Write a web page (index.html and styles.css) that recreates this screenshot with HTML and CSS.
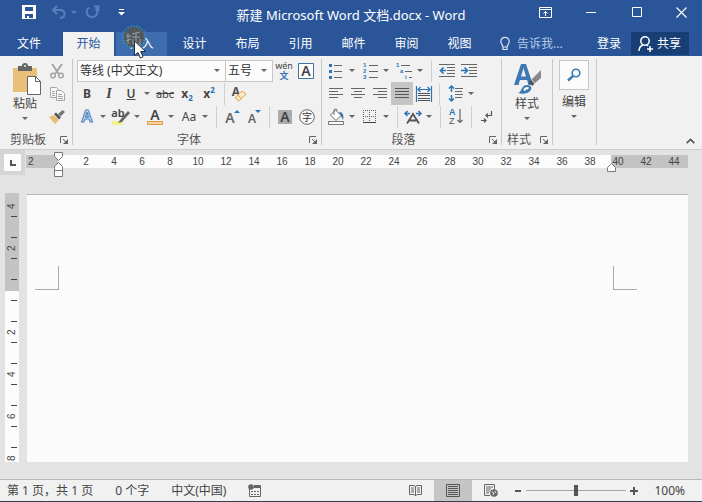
FILE: index.html
```html
<!DOCTYPE html>
<html lang="zh-CN">
<head>
  <meta charset="utf-8">
  <title>新建 Microsoft Word 文档.docx - Word</title>
  <link rel="stylesheet" href="styles.css">
</head>
<body>
  <header class="titlebar">
    <div class="quick-access">
      <button class="qa-btn" aria-label="保存">
        <svg width="14" height="14" viewBox="0 0 14 14"><path d="M0 0h14v14H0z" fill="#fff"/><path d="M3 2h8v4H3zM3 9h8v4H7v-2H5v2H3z" fill="#2a5699"/></svg>
      </button>
      <button class="qa-btn qa-off" aria-label="撤消">
        <svg width="15" height="14" viewBox="0 0 15 14"><path d="M6 1L2 5l4 4M2 5h7c3 0 4.500 1.500 4.500 4S12 13 9 13" fill="none" stroke="currentColor" stroke-width="2"/></svg>
      </button>
      <button class="drop qa-off" aria-label="撤消选项"></button>
      <button class="qa-btn qa-off" aria-label="重复">
        <svg width="15" height="14" viewBox="0 0 15 14"><path d="M9 1.500h4.500V6M13 2.500L10.500 5M4 2.500A5.300 5.300 0 1 0 11.500 4" fill="none" stroke="currentColor" stroke-width="2"/></svg>
      </button>
      <button class="qa-btn" aria-label="自定义快速访问工具栏">
        <svg width="7" height="7" viewBox="0 0 7 7"><path d="M1 0h5v1H1zM0 3h7L3.500 6.500z" fill="#fff"/></svg>
      </button>
    </div>
    <h1 class="doc-title">新建 Microsoft Word 文档.docx - Word</h1>
    <div class="window-controls">
      <button class="win-btn" aria-label="功能区显示选项">
        <svg width="13" height="11" viewBox="0 0 13 11"><path d="M.5.5h12v10H.5zM0 2.500h13M6.500 9V4.500M4.500 6.500l2-2 2 2" fill="none" stroke="#fff"/></svg>
      </button>
      <button class="win-btn" aria-label="最小化">
        <svg width="11" height="11" viewBox="0 0 11 11"><path d="M0 5.500h10" stroke="#fff"/></svg>
      </button>
      <button class="win-btn" aria-label="最大化">
        <svg width="11" height="11" viewBox="0 0 11 11"><path d="M.5.5h9v9h-9z" fill="none" stroke="#fff"/></svg>
      </button>
      <button class="win-btn" aria-label="关闭">
        <svg width="11" height="11" viewBox="0 0 11 11"><path d="M.5.5l10 10M10.500.5l-10 10" stroke="#fff" stroke-width="1.1"/></svg>
      </button>
    </div>
  </header>

  <nav class="tabs">
    <button class="tab tab-file">文件</button>
    <button class="tab tab-active">开始</button>
    <button class="tab tab-hover">插入
      <svg class="pointer" width="28" height="38" viewBox="0 0 28 38"><circle cx="12" cy="12" r="10.500" fill="#51585f"/><circle cx="12" cy="12" r="11" fill="none" stroke="#2fa3bd" stroke-width="2" stroke-dasharray="1 2"/><path d="M6 8v11M4 11h5M4 16l5-2M10 9l8-2M10 12h8M14 8v11M11 14v5h7v-5" fill="none" stroke="#98a09f"/><path d="M12.500 16v14.500l3.500-3 2.300 5.500 2.700-1.200-2.300-5.300h4.800z" fill="#fff" stroke="#222b3b"/></svg>
    </button>
    <button class="tab">设计</button>
    <button class="tab">布局</button>
    <button class="tab">引用</button>
    <button class="tab">邮件</button>
    <button class="tab">审阅</button>
    <button class="tab">视图</button>
    <button class="tell-me">
      <svg width="10" height="14" viewBox="0 0 10 14"><path d="M3 10C3 8 .8 7 .8 4.500a4.200 4.200 0 0 1 8.400 0C9.200 7 7 8 7 10zM3 10v2.500h4V10" fill="none" stroke="#dce6f4" stroke-width="1.2"/></svg>
      告诉我...
    </button>
    <div class="account">
      <button class="sign-in">登录</button>
      <button class="share">
        <svg width="15" height="16" viewBox="0 0 15 16"><circle cx="7" cy="5" r="4.200" fill="none" stroke="#fff" stroke-width="1.500"/><path d="M1 15c0-3 1.500-5 4-6M9 9l1 1M12 10v6M9 13h6" fill="none" stroke="#fff" stroke-width="1.500"/></svg>
        共享
      </button>
    </div>
  </nav>

  <main class="ribbon">
    <section class="group">
      <div class="group-body group-split">
        <button class="big-btn">
          <svg width="32" height="33" viewBox="0 0 32 33"><path d="M4 5h24v24H4z" fill="#e8c079"/><path d="M9 3h4a3 3 0 0 1 6 0h4v5H9z" fill="#666"/><circle cx="16" cy="3" r="1" fill="#f1f1f1"/><path d="M18.500 13.500h8l5 5v13h-13z" fill="#fff" stroke="#666"/><path d="M26.500 13.500v5h5" fill="none" stroke="#666"/></svg>
          <span>粘贴</span>
          <i class="caret"></i>
        </button>
        <div class="stack">
          <button class="tool" aria-label="剪切">
            <svg width="16" height="16" viewBox="0 0 16 16" fill="none" stroke="#a5a5a5"><path d="M3 1l7 10M13 1L6 11" stroke-width="2"/><circle cx="4" cy="12.500" r="2.300" stroke-width="1.500"/><circle cx="12" cy="12.500" r="2.300" stroke-width="1.500"/></svg>
          </button>
          <button class="tool" aria-label="复制">
            <svg width="15" height="14" viewBox="0 0 15 14" fill="#f6f6f6" stroke="#a5a5a5"><path d="M.5.500h6l2 2v8h-8z"/><path d="M2 4.500h3M2 6.500h3M2 8.500h3"/><path d="M6.500 3.500h5l3 3v7h-8z"/><path d="M8 7.500h4M8 9.500h5M8 11.500h5"/></svg>
          </button>
          <button class="tool" aria-label="格式刷">
            <svg width="16" height="14" viewBox="0 0 16 14"><path d="M0 7l5-2 5 5-4 4z" fill="#e8bd72"/><path d="M5 4l2-1.500 5 5L10 9.500z" fill="#555"/><path d="M9 4l4.500-4L16 2l-4.500 4.500z" fill="#777"/></svg>
          </button>
        </div>
      </div>
      <footer class="group-foot"><span>剪贴板</span><button class="launcher" aria-label="剪贴板设置"><svg width="8" height="8" viewBox="0 0 8 8"><path d="M.5 7V.5H7M3 3l3 3" fill="none" stroke="#666"/><path d="M8 3v5H3z" fill="#666"/></svg></button></footer>
    </section>

    <section class="group">
      <div class="group-body">
        <div class="row row-combos">
          <label class="combo combo-font"><select aria-label="字体"><option>等线 (中文正文)</option></select><i class="caret"></i></label>
          <label class="combo combo-size"><select aria-label="字号"><option>五号</option></select><i class="caret"></i></label>
          <button class="tool" aria-label="拼音指南">
            <svg width="20" height="20" viewBox="0 0 20 20"><text x="10" y="8" font-size="9" text-anchor="middle" fill="#444">wén</text><text x="10" y="18" font-size="9" font-weight="bold" text-anchor="middle" fill="#2e75b6">文</text></svg>
          </button>
          <button class="tool" aria-label="字符边框">
            <svg width="16" height="16" viewBox="0 0 16 16"><path d="M.5.5h15v15H.5z" fill="#fff" stroke="#41719c"/><text x="8" y="13" font-size="14" font-weight="600" text-anchor="middle" fill="#444">A</text></svg>
          </button>
        </div>
        <div class="row">
          <button class="tool"><b>B</b></button>
          <button class="tool italic">I</button>
          <button class="tool underline">U</button>
          <button class="drop" aria-label="下划线样式"></button>
          <button class="tool strike">abc</button>
          <button class="tool script"><b>x<sub>2</sub></b></button>
          <button class="tool script"><b>x<sup>2</sup></b></button>
          <hr class="sep">
          <button class="tool" aria-label="清除所有格式">
            <svg width="16" height="16" viewBox="0 0 16 16"><text x="4" y="10" font-size="12" font-weight="bold" text-anchor="middle" fill="#555">A</text><path d="M10 5l4 3-7 7-4-3z" fill="#fbe8c6" stroke="#e3a24a"/><path d="M5.500 9l4 3.500" stroke="#e3a24a"/></svg>
          </button>
        </div>
        <div class="row">
          <button class="tool" aria-label="文本效果">
            <svg width="16" height="18" viewBox="0 0 16 18"><text x="8" y="14" font-size="16" font-weight="600" text-anchor="middle" fill="#fff" stroke="#4a84c4" stroke-width="1.200">A</text></svg>
          </button>
          <button class="drop" aria-label="文本效果选项"></button>
          <button class="tool" aria-label="突出显示">
            <svg width="18" height="18" viewBox="0 0 18 18"><path d="M0 13h11v4H0z" fill="#f3f08e"/><text x="6" y="9" font-size="11" font-weight="600" text-anchor="middle" fill="#444">ab</text><path d="M16 3l2 2-8 9-4 1 2-3z" fill="#666"/></svg>
          </button>
          <button class="drop" aria-label="突出显示颜色"></button>
          <button class="tool" aria-label="字体颜色">
            <svg width="16" height="18" viewBox="0 0 16 18"><text x="8" y="12" font-size="14" font-weight="600" text-anchor="middle" fill="#444">A</text><path d="M.5 13.500h15v3H.5z" fill="#f6d19a" stroke="#d99a4e"/></svg>
          </button>
          <button class="drop" aria-label="字体颜色选项"></button>
          <button class="tool">Aa</button>
          <button class="drop" aria-label="更改大小写"></button>
          <hr class="sep">
          <button class="tool" aria-label="增大字号">
            <svg width="16" height="18" viewBox="0 0 16 18"><text x="6" y="15" font-size="14" font-weight="600" text-anchor="middle" fill="#666">A</text><path d="M10 5h6l-3-3z" fill="#2e75b6"/></svg>
          </button>
          <button class="tool" aria-label="减小字号">
            <svg width="16" height="18" viewBox="0 0 16 18"><text x="6" y="15" font-size="12" font-weight="600" text-anchor="middle" fill="#666">A</text><path d="M9 2h6l-3 3z" fill="#2e75b6"/></svg>
          </button>
          <hr class="sep">
          <button class="tool" aria-label="字符底纹">
            <svg width="14" height="14" viewBox="0 0 14 14"><path d="M0 0h14v14H0z" fill="#ababab"/><text x="7" y="12" font-size="14" font-weight="600" text-anchor="middle" fill="#444">A</text></svg>
          </button>
          <button class="tool" aria-label="带圈字符">
            <svg width="16" height="16" viewBox="0 0 16 16"><circle cx="8" cy="8" r="7.300" fill="#fafafa" stroke="#666"/><text x="8" y="12" font-size="10" text-anchor="middle" fill="#333">字</text></svg>
          </button>
        </div>
      </div>
      <footer class="group-foot"><span>字体</span><button class="launcher" aria-label="字体设置"><svg width="8" height="8" viewBox="0 0 8 8"><path d="M.5 7V.5H7M3 3l3 3" fill="none" stroke="#666"/><path d="M8 3v5H3z" fill="#666"/></svg></button></footer>
    </section>

    <section class="group">
      <div class="group-body">
        <div class="row">
          <button class="tool" aria-label="项目符号">
            <svg width="14" height="16" viewBox="0 0 14 16"><path d="M0 1h3v3H0zM0 7h3v3H0zM0 13h3v3H0z" fill="#2e75b6"/><path d="M5 2.500h8M5 8.500h8M5 14.500h8" stroke="#666"/></svg>
          </button>
          <button class="drop" aria-label="项目符号库"></button>
          <button class="tool" aria-label="编号">
            <svg width="15" height="18" viewBox="0 0 15 18"><g class="tiny"><text x="0" y="5">1</text><text x="0" y="11">2</text><text x="0" y="17">3</text></g><path d="M6 3.500h9M6 9.500h9M6 15.500h9" stroke="#666"/></svg>
          </button>
          <button class="drop" aria-label="编号库"></button>
          <button class="tool" aria-label="多级列表">
            <svg width="18" height="18" viewBox="0 0 18 18"><g class="tiny"><text x="1" y="5">1</text><text x="5" y="11">a</text><text x="10" y="17">i</text></g><path d="M6 3.500h9M10 9.500h7M14 15.500h3" stroke="#666"/></svg>
          </button>
          <button class="drop" aria-label="列表库"></button>
          <hr class="sep">
          <button class="tool" aria-label="减少缩进量">
            <svg width="17" height="14" viewBox="0 0 17 14"><path d="M0 .5h16M8 3.500h8M8 6.500h8M8 9.500h8M0 12.500h16" stroke="#666"/><path d="M7 6.500H2M4.500 3.500l-3 3 3 3" fill="none" stroke="#2e75b6" stroke-width="1.700"/></svg>
          </button>
          <button class="tool" aria-label="增加缩进量">
            <svg width="17" height="14" viewBox="0 0 17 14"><path d="M0 .5h16M8 3.500h8M8 6.500h8M8 9.500h8M0 12.500h16" stroke="#666"/><path d="M0 6.500h6M3.500 3.500l3 3-3 3" fill="none" stroke="#2e75b6" stroke-width="1.700"/></svg>
          </button>
        </div>
        <div class="row">
          <button class="tool" aria-label="左对齐"><svg width="14" height="11" viewBox="0 0 14 11"><path d="M0 .5h14M0 3.500h9M0 6.500h14M0 9.500h9" stroke="#666"/></svg></button>
          <button class="tool" aria-label="居中"><svg width="14" height="11" viewBox="0 0 14 11"><path d="M0 .5h14M3 3.500h8M0 6.500h14M3 9.500h8" stroke="#666"/></svg></button>
          <button class="tool" aria-label="右对齐"><svg width="14" height="11" viewBox="0 0 14 11"><path d="M0 .5h14M5 3.500h9M0 6.500h14M5 9.500h9" stroke="#666"/></svg></button>
          <button class="tool tool-on" aria-label="两端对齐"><svg width="14" height="11" viewBox="0 0 14 11"><path d="M0 .5h14M0 3.500h14M0 6.500h14M0 9.500h14" stroke="#555"/></svg></button>
          <button class="tool" aria-label="分散对齐"><svg width="16" height="16" viewBox="0 0 16 16"><path d="M.5 0v16M15.500 0v16M2 3.500h12M4.500 1l-2.500 2.500L4.500 6M11.500 1L14 3.500 11.500 6" fill="none" stroke="#2e75b6" stroke-width="1.200"/><path d="M2 7.500h12M2 9.500h12M2 12.500h12M2 14.500h12" stroke="#555"/></svg></button>
          <hr class="sep">
          <button class="tool" aria-label="行距"><svg width="15" height="17" viewBox="0 0 15 17"><path d="M3.500 1v15M1 3.500L3.500 1 6 3.500M1 13.500L3.500 16 6 13.500" fill="none" stroke="#2e75b6" stroke-width="1.500"/><path d="M1 8.500h5" stroke="#f1f1f1" stroke-width="3"/><path d="M7 3.500h8M7 6.500h7M7 9.500h8M7 12.500h7" stroke="#666"/></svg></button>
          <button class="drop" aria-label="行距选项"></button>
        </div>
        <div class="row">
          <button class="tool" aria-label="底纹"><svg width="17" height="18" viewBox="0 0 17 18"><path d="M2.500 7l5-5 5.500 5.500-5 5z" fill="#fff" stroke="#666"/><path d="M6 7V2.500a1.500 1.500 0 0 1 3 0" fill="none" stroke="#666"/><path d="M11 4c4 0 5 3 4 8l-2-4z" fill="#41719c"/><path d="M.5 13.500h15v3H.5z" fill="#fff" stroke="#777"/></svg></button>
          <button class="drop" aria-label="底纹颜色"></button>
          <button class="tool" aria-label="边框"><svg width="14" height="14" viewBox="0 0 14 14"><path d="M.5 0v13M6.500 0v13M12.500 0v13M0 .5h13M0 6.500h13" stroke="#666" stroke-dasharray="1 1"/><path d="M0 12.500h13" stroke="#444"/></svg></button>
          <button class="drop" aria-label="边框选项"></button>
          <hr class="sep">
          <button class="tool" aria-label="中文版式"><svg width="18" height="16" viewBox="0 0 18 16"><path d="M6 4.500H1M3.500 2L1 4.500 3.500 7M12 4.500h5M14.500 2L17 4.500 14.500 7" fill="none" stroke="#2e75b6" stroke-width="1.500"/><path d="M3 14.500L9 5l6 9.500M5.500 11.500h7" fill="none" stroke="#555" stroke-width="1.800"/></svg></button>
          <button class="drop" aria-label="中文版式选项"></button>
          <hr class="sep">
          <button class="tool" aria-label="排序"><svg width="15" height="17" viewBox="0 0 15 17"><text class="sort-letter" x="0" y="7" font-weight="bold" fill="#2e75b6">A</text><text class="sort-letter" x="0" y="16" fill="#555">Z</text><path d="M11 1v13.500M8.500 12l2.500 2.500 2.500-2.500" fill="none" stroke="#666" stroke-width="1.200"/></svg></button>
          <hr class="sep">
          <button class="tool" aria-label="显示编辑标记"><svg width="12" height="12" viewBox="0 0 12 12"><path d="M10.500 0v4.500H5M7 2.500l-2 2 2 2M0 9.500h5M3 7.500l2 2-2 2" fill="none" stroke="#555" stroke-width="1.200"/></svg></button>
        </div>
      </div>
      <footer class="group-foot"><span>段落</span><button class="launcher" aria-label="段落设置"><svg width="8" height="8" viewBox="0 0 8 8"><path d="M.5 7V.5H7M3 3l3 3" fill="none" stroke="#666"/><path d="M8 3v5H3z" fill="#666"/></svg></button></footer>
    </section>

    <section class="group">
      <div class="group-body group-split">
        <button class="big-btn">
          <svg width="30" height="33" viewBox="0 0 30 33"><path d="M2 22L9 1h5l7 21h-4.500l-1.400-5H7.900l-1.400 5zM9 13.500h5L11.500 5z" fill="#3c78b4" fill-rule="evenodd"/><path d="M29 7v8l-6 5-3.500-3.500z" fill="#888"/><path d="M16.500 19l2.500-2 3.500 3.500-2 2.500z" fill="#555"/><path d="M6 30c4-.5 3-8 9-8 4 0 5.500 3 3.500 5.500C16 31 10 31.500 6 30z" fill="#3c78b4"/><path d="M12 27.500c1-2 2.500-3 4.500-2" fill="none" stroke="#fff" stroke-width="2"/></svg>
          <span>样式</span>
          <i class="caret"></i>
        </button>
      </div>
      <footer class="group-foot"><span>样式</span><button class="launcher" aria-label="样式设置"><svg width="8" height="8" viewBox="0 0 8 8"><path d="M.5 7V.5H7M3 3l3 3" fill="none" stroke="#666"/><path d="M8 3v5H3z" fill="#666"/></svg></button></footer>
    </section>

    <section class="group">
      <div class="group-body group-split">
        <button class="big-btn">
          <span class="find-box"><svg width="14" height="14" viewBox="0 0 14 14"><circle cx="9" cy="5" r="3.800" fill="none" stroke="#3c78b4" stroke-width="1.600"/><path d="M6 8l-5 4.500" stroke="#3c78b4" stroke-width="2.400"/></svg></span>
          <span>编辑</span>
          <i class="caret"></i>
        </button>
      </div>
    </section>

    <button class="collapse" aria-label="折叠功能区"><svg width="9" height="6" viewBox="0 0 9 6"><path d="M.7 5.200l3.800-3.800 3.800 3.800" fill="none" stroke="#555" stroke-width="1.700"/></svg></button>
  </main>

  <div class="workspace">
    <button class="tab-stop" aria-label="左对齐制表符"><svg width="6" height="6" viewBox="0 0 6 6"><path d="M1 0v5h5" fill="none" stroke="#555" stroke-width="2"/></svg></button>
    <div class="ruler-h">
      <span class="ruler-start">2</span>
      <span>2</span><span>4</span><span>6</span><span>8</span><span>10</span><span>12</span><span>14</span><span>16</span><span>18</span><span>20</span><span>22</span><span>24</span><span>26</span><span>28</span><span>30</span><span>32</span><span>34</span><span>36</span><span>38</span><span>40</span><span>42</span><span>44</span>
      <svg class="indent-left" width="9" height="26" viewBox="0 0 9 26"><path d="M.5.500h8v4l-4 4-4-4zM.5 16.500v-2l4-4 4 4v4h-8v-2M.5 18.500h8v6h-8z" fill="#fff" stroke="#777"/></svg>
      <svg class="indent-right" width="9" height="9" viewBox="0 0 9 9"><path d="M.5 8.500v-4l4-4 4 4v4z" fill="#fff" stroke="#777"/></svg>
    </div>
    <div class="ruler-v">
      <span>4</span><span>2</span><span></span><span>2</span><span>4</span><span>6</span><span>8</span>
    </div>
    <div class="page">
      <i class="crop crop-left"></i>
      <i class="crop crop-right"></i>
    </div>
  </div>

  <footer class="statusbar">
    <span>第 1 页&#65292;共 1 页</span>
    <span>0 个字</span>
    <span>中文(中国)</span>
    <button class="macro" aria-label="录制宏"><svg width="13" height="13" viewBox="0 0 13 13"><path d="M1.500 5v7.500h11v-11H6" fill="none" stroke="#666"/><path d="M6 2h6v2H6z" fill="#666"/><circle cx="3" cy="3" r="2.800" fill="#666"/><path d="M3 7.500h8M3 10.500h8" stroke="#666" stroke-dasharray="2 1"/></svg></button>
    <div class="view-tools">
      <button class="view-btn" aria-label="阅读视图"><svg width="13" height="13" viewBox="0 0 13 13"><path d="M.5 1.500H5l1.500 1L8 1.500h4.500v9H8l-1.500 1.500L5 10.500H.5zM6.500 2v10M2 4h3M2 6h3M2 8h3M8 4h3M8 6h3M8 8h3" fill="none" stroke="#666"/></svg></button>
      <button class="view-btn view-on" aria-label="页面视图"><svg width="14" height="13" viewBox="0 0 14 13"><path d="M.5.500h13v12H.5zM2 2.500h10M2 4.500h10M2 6.500h10M2 8.500h10M2 10.500h10" fill="none" stroke="#555"/></svg></button>
      <button class="view-btn" aria-label="Web 版式视图"><svg width="14" height="13" viewBox="0 0 14 13"><path d="M6 11.500H.5v-11h10V5M2 3h7M2 5h5M2 7h4M2 9h3" fill="none" stroke="#666"/><circle cx="10" cy="9" r="3.800" fill="#666"/><path d="M8 8l2 1-1 2M11 7l1 2" fill="none" stroke="#eee"/></svg></button>
    </div>
    <div class="zoom-tools">
      <button class="zoom-btn" aria-label="缩小"><svg width="8" height="8" viewBox="0 0 8 8"><path d="M1 4h6" stroke="#555" stroke-width="2"/></svg></button>
      <input class="zoom-range" type="range" min="0" max="100" value="50" aria-label="缩放">
      <button class="zoom-btn" aria-label="放大"><svg width="8" height="8" viewBox="0 0 8 8"><path d="M0 4h8M4 0v8" stroke="#555" stroke-width="2"/></svg></button>
      <span class="zoom-value">100%</span>
    </div>
  </footer>
</body>
</html>
```

FILE: styles.css
```css
* {
  margin: 0;
  padding: 0;
  box-sizing: border-box;
}

body {
  height: 100vh;
  display: flex;
  flex-direction: column;
  overflow: hidden;
  background: #e3e3e3;
  color: #444;
  font-family: 'Noto Sans', 'Noto Sans CJK SC', sans-serif;
  font-size: 12px;
  line-height: 16px;
}

button {
  display: flex;
  align-items: center;
  justify-content: center;
  border: none;
  background: transparent;
  color: inherit;
  font: inherit;
}

svg {
  display: block;
  flex-shrink: 0;
  overflow: visible;
}

/* Title bar */
.titlebar {
  display: grid;
  grid-template-columns: 1fr auto 1fr;
  height: 32px;
  flex-shrink: 0;
  background: #2a5699;
  color: #fff;
}

.quick-access {
  display: flex;
  align-items: center;
  height: 24px;
  padding-left: 18px;
}

.qa-btn {
  width: 22px;
  height: 22px;
  margin-right: 7px;
}

.qa-off {
  color: #5580bd;
}

.quick-access .drop {
  margin-left: -7px;
}

.doc-title {
  padding-top: 7px;
  font-size: 13px;
  font-weight: 400;
}

.window-controls {
  display: flex;
  justify-content: flex-end;
  height: 24px;
}

.win-btn {
  width: 46px;
}

.win-btn:last-child {
  width: 42px;
}

/* Ribbon tabs */
.tabs {
  display: flex;
  gap: 2px;
  height: 24px;
  flex-shrink: 0;
  background: #2a5699;
  color: #fff;
}

.tab {
  position: relative;
  width: 51px;
}

.tab-file {
  width: 58px;
  margin-right: 3px;
}

.tab-active {
  background: #f1f1f1;
  color: #2a5699;
}

.tab-hover {
  background: #3f6caf;
}

.pointer {
  position: absolute;
  left: 6px;
  top: -7px;
  z-index: 2;
}

.tell-me {
  gap: 7px;
  margin-left: 13px;
  color: #b5cbe8;
}

.account {
  display: flex;
  gap: 10px;
  margin-left: auto;
  padding-right: 13px;
}

.share {
  gap: 4px;
  height: 23px;
  padding: 0 8px 0 7px;
  background: #173f76;
}

/* Ribbon */
.ribbon {
  display: flex;
  flex-shrink: 0;
  padding-top: 3px;
  height: 94px;
  background: #f1f1f1;
  border-bottom: 1px solid #cdcdcd;
}

.group {
  display: flex;
  flex-direction: column;
  padding-right: 1px;
  background: linear-gradient(#c8c8c8, #c8c8c8) right top / 1px 86px no-repeat;
}

.group-body {
  padding: 0 3px;
}

.group-split {
  display: flex;
  padding: 0 4px;
}

.row {
  display: flex;
  align-items: center;
  height: 23px;
}

.row-combos {
  padding-left: 1px;
}

.tool {
  width: 22px;
  height: 23px;
  font-size: 12px;
}

.tool-on {
  background: #c5c5c5;
}

.tool.italic {
  font-family: 'Liberation Serif', serif;
  font-style: italic;
  font-weight: 700;
  font-size: 14px;
}

.tool.underline {
  font-weight: 600;
  text-decoration: underline;
}

.tool.strike {
  font-size: 11px;
  text-decoration: line-through;
}

.script sub,
.script sup {
  color: #2e75b6;
  font-size: 8px;
  line-height: 0;
}

.tiny {
  fill: #2e75b6;
  font-family: 'Liberation Sans', sans-serif;
  font-size: 6px;
  font-weight: 700;
}

.sort-letter {
  font-family: 'Liberation Sans', sans-serif;
  font-size: 9px;
}

.drop {
  width: 12px;
  height: 23px;
  justify-content: flex-start;
  padding-left: 2px;
}

.drop::before,
.caret {
  content: '';
  border: 3px solid transparent;
  border-top-color: #666;
  border-bottom: none;
}

.qa-off.drop::before {
  border-top-color: #5580bd;
}

.sep {
  width: 1px;
  height: 22px;
  margin: 0 4px;
  border: none;
  background: #d0d0d0;
}

.combo {
  display: flex;
  align-items: center;
  height: 22px;
  padding-right: 5px;
  background: #fcfcfc;
  border: 1px solid #c6c6c6;
}

.combo select {
  flex: 1;
  min-width: 0;
  padding-left: 2px;
  appearance: none;
  border: none;
  background: transparent;
  color: #333;
  font: inherit;
}

.combo-font {
  width: 149px;
}

.combo-size {
  width: 47px;
  border-left: none;
}

.big-btn {
  flex-direction: column;
  justify-content: flex-start;
  width: 42px;
  height: 69px;
  padding-top: 4px;
}

.big-btn .caret {
  margin-top: 5px;
}

.find-box {
  display: flex;
  align-items: center;
  justify-content: center;
  width: 30px;
  height: 30px;
  margin: -3px 0 4px;
  background: #fcfcfc;
  border: 1px solid #c6c6c6;
}

.group:nth-of-type(5) .group-split {
  padding: 0 1px 0 0;
}

.group-foot {
  display: flex;
  align-items: center;
  height: 22px;
  padding: 3px 4px 0 0;
  color: #555;
}

.group-foot span {
  flex: 1;
  text-align: center;
}

.launcher {
  width: 12px;
  height: 12px;
  justify-content: flex-end;
}

.collapse {
  align-self: flex-end;
  width: 16px;
  height: 16px;
  margin-left: auto;
  margin-right: 4px;
}

/* Document area */
.workspace {
  display: grid;
  grid-template-columns: 26px 1fr;
  grid-template-rows: 43px 1fr;
  flex: 1;
  min-height: 0;
  padding: 0 14px 17px 0;
}

.tab-stop {
  width: 25px;
  height: 25px;
  background: #fcfcfc;
  border: 4px solid #d5d5d5;
}

.ruler-h {
  position: relative;
  display: flex;
  height: 13px;
  margin-top: 5px;
  background: linear-gradient(to right, #c3c3c3 32px, #fcfcfc 32px, #fcfcfc 585px, #c3c3c3 585px);
  font-family: 'Liberation Sans', sans-serif;
  font-size: 10px;
  line-height: 13px;
}

.ruler-h span {
  width: 28px;
  text-align: center;
}

.ruler-h .ruler-start {
  width: 46px;
  padding-left: 2px;
  text-align: left;
}

.indent-left {
  position: absolute;
  left: 28px;
  top: -3px;
}

.indent-right {
  position: absolute;
  left: 581px;
  top: 8px;
}

.ruler-v {
  width: 14px;
  margin-left: 5px;
  overflow: hidden;
  background: linear-gradient(#c3c3c3 98px, #fcfcfc 98px);
  font-family: 'Liberation Sans', sans-serif;
  font-size: 10px;
}

.ruler-v span {
  display: block;
  width: 14px;
  height: 42px;
  line-height: 14px;
  text-align: center;
  writing-mode: vertical-rl;
  transform: rotate(180deg);
  background:
    linear-gradient(#444, #444) 2px 10px / 6px 1px no-repeat,
    linear-gradient(#444, #444) 2px 31px / 6px 1px no-repeat;
}

/* the top cell starts inside the margin, so it keeps only its lower tick */
.ruler-v span:first-child {
  margin-top: -8px;
  background: linear-gradient(#444, #444) 2px 10px / 6px 1px no-repeat;
}

.page {
  display: flex;
  justify-content: space-between;
  margin: 1px 0 0 1px;
  padding: 71px 51px 0 8px;
  background: #fbfbfb;
  border-top: 1px solid #b8b8b8;
}

.crop {
  width: 24px;
  height: 24px;
  border-bottom: 1px solid #a9a9a9;
}

.crop-left {
  border-right: 1px solid #a9a9a9;
}

.crop-right {
  border-left: 1px solid #a9a9a9;
}

/* Status bar */
.statusbar {
  display: flex;
  align-items: center;
  gap: 22px;
  height: 23px;
  flex-shrink: 0;
  padding-left: 7px;
  background: #f1f1f1;
  border-top: 1px solid #b8b8b8;
  border-bottom: 1px solid #333c49;
}

.view-tools {
  display: flex;
  height: 100%;
  margin-left: auto;
  margin-right: -18px;
}

.view-btn {
  width: 38px;
  height: 100%;
}

.view-on {
  background: #c5c5c5;
}

.zoom-tools {
  display: flex;
  align-items: center;
  padding-right: 17px;
}

.zoom-btn {
  width: 8px;
  height: 16px;
}

.zoom-range {
  width: 100px;
  height: 12px;
  margin: 0 4px;
  appearance: none;
  background: linear-gradient(#a5a5a5, #a5a5a5) center / 100% 1px no-repeat;
}

.zoom-range::-webkit-slider-thumb {
  appearance: none;
  width: 4px;
  height: 11px;
  background: #555;
}

.zoom-value {
  margin-left: 16px;
}
```
